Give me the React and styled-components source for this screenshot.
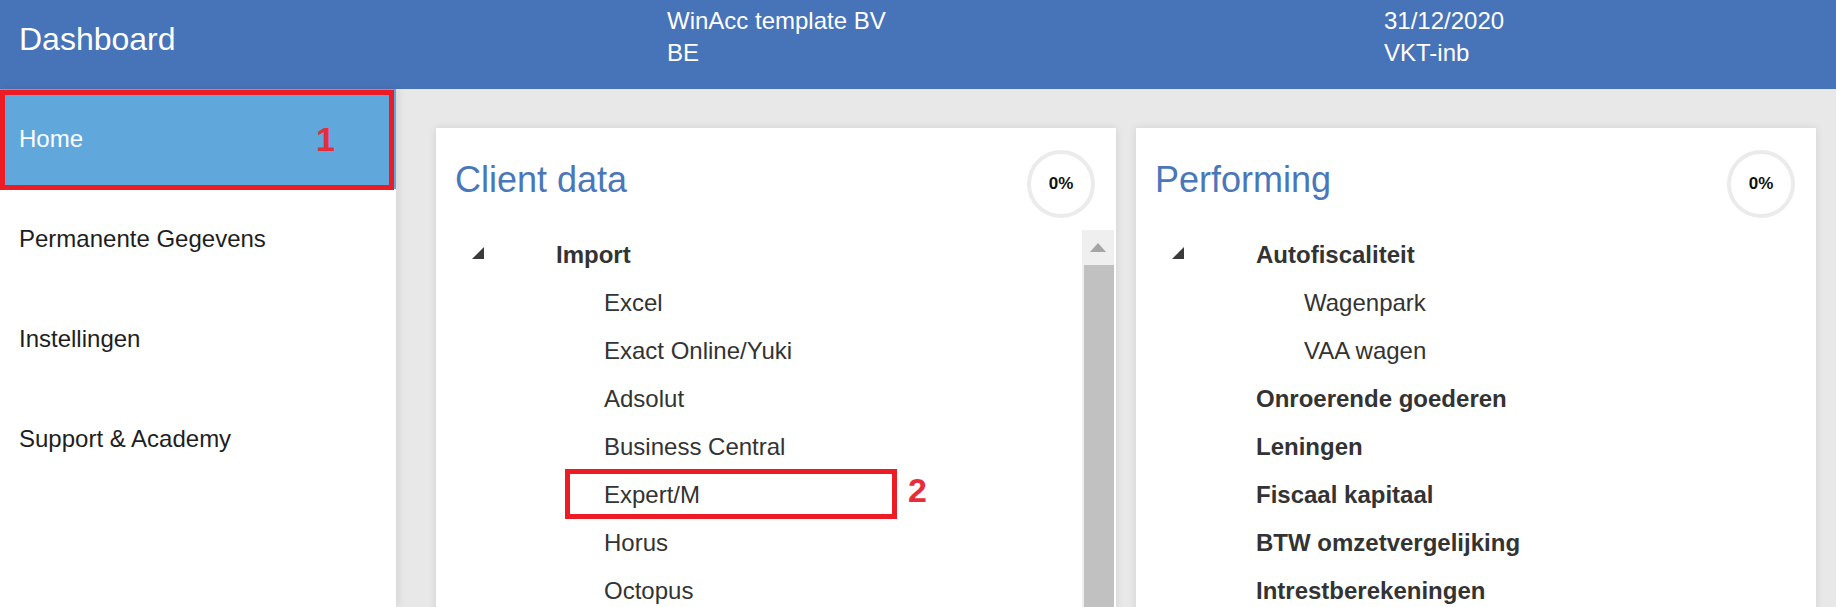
import React from 'react';
import styled, { createGlobalStyle } from 'styled-components';

const clientItems = [
    { label: 'Import', level: 0, bold: true, open: true },
    { label: 'Excel', level: 1 },
    { label: 'Exact Online/Yuki', level: 1 },
    { label: 'Adsolut', level: 1 },
    { label: 'Business Central', level: 1 },
    { label: 'Expert/M', level: 1, mark: '2' },
    { label: 'Horus', level: 1 },
    { label: 'Octopus', level: 1 },
];

const performingItems = [
    { label: 'Autofiscaliteit', level: 0, bold: true, open: true },
    { label: 'Wagenpark', level: 1 },
    { label: 'VAA wagen', level: 1 },
    { label: 'Onroerende goederen', level: 0, bold: true },
    { label: 'Leningen', level: 0, bold: true },
    { label: 'Fiscaal kapitaal', level: 0, bold: true },
    { label: 'BTW omzetvergelijking', level: 0, bold: true },
    { label: 'Intrestberekeningen', level: 0, bold: true },
];

const navItems = ['Home', 'Permanente Gegevens', 'Instellingen', 'Support & Academy'];

const Collapse = () => (
    <svg width="12" height="12" viewBox="0 0 12 12">
        <polygon points="12,0 12,12 0,12" fill="#3a3a3a" />
    </svg>
);

const TreeList = ({ items }) => (
    <Tree>
        {items.map((item) => (
            <Row key={item.label}>
                <Toggle>{item.open && <Collapse />}</Toggle>
                <Label $level={item.level} $bold={item.bold}>
                    {item.label}
                </Label>
                {item.mark && (
                    <>
                        <MarkBox $left={129} $top={-2} $width={332} $height={50} />
                        <MarkNumber $left={472} $top={2}>
                            {item.mark}
                        </MarkNumber>
                    </>
                )}
            </Row>
        ))}
    </Tree>
);

const App = () => {
    return (
        <Page>
            <GlobalStyle />
            <Header>
                <Brand>Dashboard</Brand>
                <Info>
                    <span>WinAcc template BV</span>
                    <span>BE</span>
                </Info>
                <Info>
                    <span>31/12/2020</span>
                    <span>VKT-inb</span>
                </Info>
            </Header>
            <Body>
                <Sidebar>
                    {navItems.map((name, i) => (
                        <NavItem key={name} $active={i === 0}>
                            {name}
                            {i === 0 && (
                                <>
                                    <MarkBox $left={0} $top={1} $width={394} $height={100} />
                                    <MarkNumber $left={316} $top={33}>
                                        1
                                    </MarkNumber>
                                </>
                            )}
                        </NavItem>
                    ))}
                </Sidebar>
                <Main>
                    <Card>
                        <CardHead>
                            <CardTitle>Client data</CardTitle>
                            <Progress>0%</Progress>
                        </CardHead>
                        <CardBody>
                            <TreeList items={clientItems} />
                            <Scrollbar>
                                <ScrollUp>
                                    <svg width="16" height="9" viewBox="0 0 16 9">
                                        <polygon points="8,0 16,9 0,9" fill="#a5a5a5" />
                                    </svg>
                                </ScrollUp>
                                <ScrollThumb />
                            </Scrollbar>
                        </CardBody>
                    </Card>
                    <Card>
                        <CardHead>
                            <CardTitle>Performing</CardTitle>
                            <Progress>0%</Progress>
                        </CardHead>
                        <CardBody>
                            <TreeList items={performingItems} />
                        </CardBody>
                    </Card>
                </Main>
            </Body>
        </Page>
    );
};

export default App;

const GlobalStyle = createGlobalStyle`
    html, body {
        margin: 0;
        padding: 0;
    }
    body {
        font-family: "Liberation Sans", Arial, sans-serif;
    }
`;

const Page = styled.div`
    height: 100vh;
    display: flex;
    flex-direction: column;
    overflow: hidden;
`;

const Header = styled.header`
    height: 89px;
    flex-shrink: 0;
    background: #4773b8;
    color: #fff;
    display: grid;
    grid-template-columns: 667px 717px 1fr;
`;

const Brand = styled.div`
    padding: 19px 0 0 19px;
    font-size: 32px;
    line-height: 40px;
`;

const Info = styled.div`
    padding-top: 5px;
    display: flex;
    flex-direction: column;
    font-size: 24px;
    line-height: 32px;
`;

const Body = styled.div`
    flex: 1;
    display: flex;
    min-height: 0;
`;

const Sidebar = styled.nav`
    width: 396px;
    flex-shrink: 0;
    background: #fff;
    box-shadow: 3px 0 8px rgba(0, 0, 0, 0.08);
    position: relative;
    z-index: 1;
`;

const NavItem = styled.div`
    position: relative;
    height: 100px;
    display: flex;
    align-items: center;
    padding-left: 19px;
    font-size: 24px;
    color: ${(p) => (p.$active ? '#fff' : '#1e1e1e')};
    background: ${(p) => (p.$active ? '#60a8dc' : 'transparent')};
`;

const MarkBox = styled.span`
    position: absolute;
    left: ${(p) => p.$left}px;
    top: ${(p) => p.$top}px;
    width: ${(p) => p.$width}px;
    height: ${(p) => p.$height}px;
    box-sizing: border-box;
    border: 5px solid #ed1c24;
    pointer-events: none;
`;

const MarkNumber = styled.span`
    position: absolute;
    left: ${(p) => p.$left}px;
    top: ${(p) => p.$top}px;
    font-family: "Liberation Sans Narrow", "Liberation Sans", sans-serif;
    font-weight: bold;
    font-size: 34px;
    line-height: 34px;
    color: #e52d3b;
`;

const Main = styled.main`
    flex: 1;
    background: #e8e8e8;
    padding: 39px 20px 0 40px;
    display: flex;
    gap: 20px;
    align-items: flex-start;
`;

const Card = styled.section`
    flex: 1;
    height: 620px;
    background: #fff;
    box-shadow: 0 0 8px rgba(0, 0, 0, 0.1);
    display: flex;
    flex-direction: column;
`;

const CardHead = styled.div`
    display: flex;
    justify-content: space-between;
    align-items: flex-start;
    padding: 22px 21px 0 19px;
`;

const CardTitle = styled.h2`
    margin: 8px 0 0;
    font-size: 36px;
    line-height: 44px;
    font-weight: normal;
    color: #4a77ba;
`;

const Progress = styled.div`
    width: 68px;
    height: 68px;
    box-sizing: border-box;
    border-radius: 50%;
    border: 4px solid #ebebeb;
    display: flex;
    align-items: center;
    justify-content: center;
    font-size: 17px;
    font-weight: bold;
    color: #111;
`;

const CardBody = styled.div`
    flex: 1;
    display: flex;
    margin-top: 13px;
`;

const Tree = styled.ul`
    flex: 1;
    list-style: none;
    margin: 0;
    padding: 0;
`;

const Row = styled.li`
    position: relative;
    height: 48px;
    display: flex;
    align-items: center;
    padding-left: 36px;
`;

const Toggle = styled.span`
    width: 84px;
    flex-shrink: 0;
    display: flex;
    align-items: center;
    margin-top: -4px;
`;

const Label = styled.span`
    margin-left: ${(p) => p.$level * 48}px;
    font-size: 24px;
    font-weight: ${(p) => (p.$bold ? 'bold' : 'normal')};
    color: #333;
`;

const Scrollbar = styled.div`
    width: 32px;
    margin-right: 2px;
    margin-top: -1px;
    display: flex;
    flex-direction: column;
    background: #efefef;
`;

const ScrollUp = styled.div`
    height: 35px;
    display: flex;
    align-items: center;
    justify-content: center;
`;

const ScrollThumb = styled.div`
    flex: 1;
    margin-left: 2px;
    background: #c1c1c1;
`;
